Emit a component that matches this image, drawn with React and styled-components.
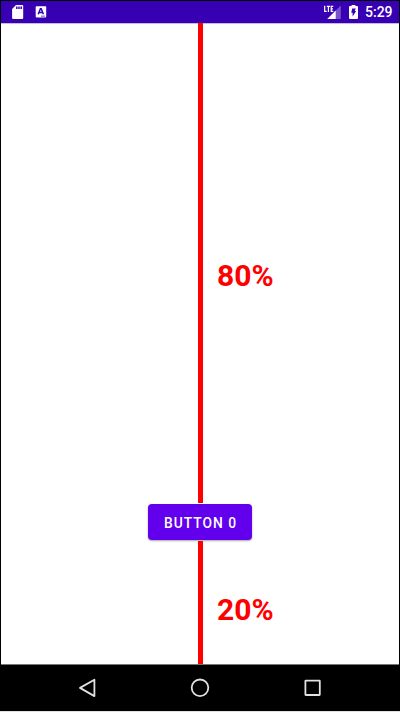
import React from 'react';
import styled, { createGlobalStyle } from 'styled-components';

const GlobalStyle = createGlobalStyle`
  * { box-sizing: border-box; }
  body { margin: 0; background: #e0e0e0; }
`;

const Device = styled.div`
  width: 400px;
  height: 711px;
  display: flex;
  flex-direction: column;
  border: 1px solid #000;
  border-bottom: 0;
  background: #fff;
  font-family: Roboto, 'Liberation Sans', sans-serif;
  overflow: hidden;
`;

const StatusBar = styled.header`
  flex: 0 0 22px;
  height: 22px;
  display: flex;
  align-items: center;
  justify-content: space-between;
  padding: 0 7px 0 11px;
  background: #3700b3;
  color: #fff;
`;

const StatusGroup = styled.div`
  display: flex;
  align-items: center;
  gap: ${(p) => p.$gap}px;
`;

const StatusIcon = styled.svg`
  display: block;
  flex: none;
`;

const Clock = styled.time`
  width: 27px;
  margin-left: -1px;
  font-size: 14px;
  font-weight: 500;
  line-height: 22px;
  white-space: nowrap;
`;

const Screen = styled.main`
  flex: 0 0 641px;
  display: flex;
  flex-direction: column;
  background: linear-gradient(#c9b8ea 1px, #fff 1px);
`;

const Segment = styled.section`
  height: ${(p) => p.$height}px;
  display: grid;
  grid-template-columns: 197px 5px 1fr;
`;

const GuideLine = styled.div`
  grid-column: 2;
  background: #f00;
`;

const Percent = styled.div`
  padding: ${(p) => p.$top}px 0 0 14px;
  color: #f00;
  font-size: 30px;
  line-height: 36px;
  font-weight: 700;
`;

const ButtonRow = styled.div`
  height: 38px;
  display: flex;
  justify-content: center;
  padding-top: 1px;
`;

const Button = styled.button`
  width: 104px;
  height: 36px;
  padding: 1px 0 0 1px;
  border: 0;
  border-radius: 4px;
  background: #6200ee;
  box-shadow: 0 1px 2px rgba(0, 0, 0, 0.35);
  color: #fff;
  font: 500 13.8px Roboto, 'Liberation Sans', sans-serif;
  letter-spacing: 1px;
  white-space: nowrap;
`;

const NavBar = styled.nav`
  flex: 0 0 47px;
  display: grid;
  grid-template-columns: repeat(3, 112.5px);
  justify-content: center;
  justify-items: center;
  align-items: center;
  border-top: 1px solid #777;
  background: #000;
`;

const NavIcon = styled.svg`
  display: block;
  fill: none;
  stroke: #e2e2e2;
  stroke-width: 1.8;
  stroke-linejoin: round;
`;

export default function App() {
  return (
    <>
      <GlobalStyle />
      <Device>
        <StatusBar>
          <StatusGroup $gap={11}>
            <StatusIcon width="12" height="14" viewBox="0 0 12 14">
              <path d="M4 0h6.2a1 1 0 0 1 1 1v12a1 1 0 0 1-1 1H1.1a1 1 0 0 1-1-1V4z" fill="#fff" />
              <path d="M4.8 1.5v2.6M7 1.5v2.6M9.2 1.5v2.6" stroke="#3700b3" strokeWidth="1.5" />
            </StatusIcon>
            <StatusIcon width="12" height="12" viewBox="0 0 12 12">
              <rect x="0.7" y="0.2" width="10.5" height="11.2" rx="0.8" fill="#fff" />
              <path d="M3.2 8.2L5.4 2.8h.8L8.4 8.2M4.2 6.6h3.4" fill="none" stroke="#3700b3" strokeWidth="1.5" />
              <path d="M6 10.2h4" stroke="#9c82d5" strokeWidth="1.4" />
            </StatusIcon>
          </StatusGroup>
          <StatusGroup $gap={8}>
            <StatusIcon width="18" height="15" viewBox="0 0 18 15">
              <path d="M17.8 0.5V14H4.3z" fill="#7853cc" />
              <path d="M12.7 5.6V14H4.3z" fill="#fff" />
              <path d="M0 0h10.6v7.2H0z" fill="#3700b3" />
              <path d="M1.7 0.8v5.6h2M3.8 1.4h3.2M5.4 1.4v5.6M10.3 1.4H8.2v5h2.1M8.2 3.9H10" fill="none" stroke="#fff" strokeWidth="1.2" />
            </StatusIcon>
            <StatusIcon width="9" height="14" viewBox="0 0 9 14">
              <path d="M2.6 0h3.8v1H8a1 1 0 0 1 1 1v11a1 1 0 0 1-1 1H1a1 1 0 0 1-1-1V2a1 1 0 0 1 1-1h1.6z" fill="#fff" />
              <path d="M3.2 3.4h3.5L5.8 6h1.4L3.6 11.4V7.8H2.2z" fill="#3700b3" />
            </StatusIcon>
            <Clock>5:29</Clock>
          </StatusGroup>
        </StatusBar>
        <Screen>
          <Segment $height={480}>
            <GuideLine />
            <Percent $top={235}>80%</Percent>
          </Segment>
          <ButtonRow>
            <Button type="button">BUTTON 0</Button>
          </ButtonRow>
          <Segment $height={123}>
            <GuideLine />
            <Percent $top={51}>20%</Percent>
          </Segment>
        </Screen>
        <NavBar>
          <NavIcon width="20" height="20" viewBox="0 0 20 20">
            <path d="M16.4 1.7v16.4L2 9.9z" />
          </NavIcon>
          <NavIcon width="20" height="20" viewBox="0 0 20 20">
            <circle cx="10" cy="9.8" r="8.3" />
          </NavIcon>
          <NavIcon width="20" height="20" viewBox="0 0 20 20">
            <rect x="2.4" y="2.6" width="14.4" height="14.4" rx="0.4" />
          </NavIcon>
        </NavBar>
      </Device>
    </>
  );
}
